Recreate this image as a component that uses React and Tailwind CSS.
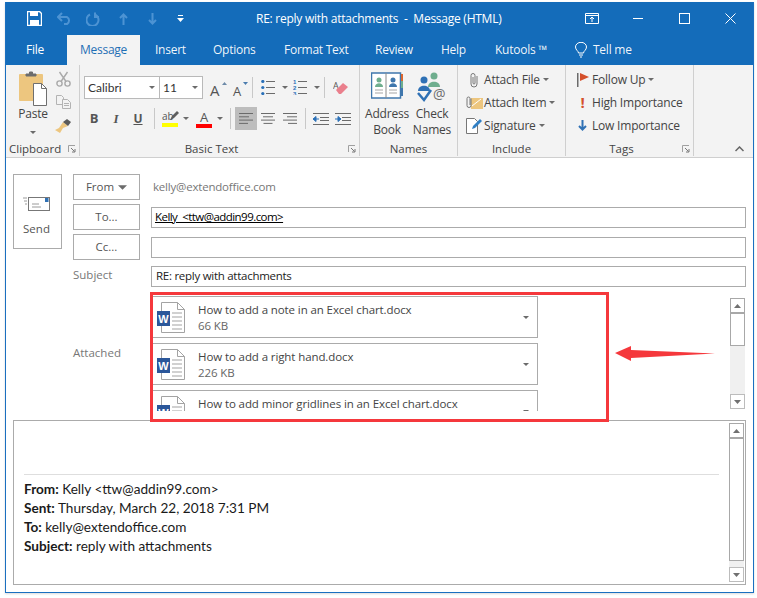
const Caret = ({ className = "" }) => (
  <svg width="6" height="3" viewBox="0 0 6 3" className={className}><path d="M0 0h6L3 3z" fill="#6b6b6b" /></svg>
);

const Launcher = ({ className = "" }) => (
  <svg width="8" height="8" viewBox="0 0 8 8" className={className}>
    <path d="M.5 7V.5H7" fill="none" stroke="#a0a0a0" />
    <path d="M3 3l3.500 3.500M7 4v3H4" fill="none" stroke="#777" />
  </svg>
);

const Divider = ({ className = "" }) => <div className={`w-px h-[21px] bg-[#c8c8c8] shrink-0 ${className}`} />;

const PasteIcon = () => (
  <svg width="28" height="36" viewBox="0 0 28 36">
    <rect x="0" y="3" width="24" height="27" rx="1" fill="#edc67f" />
    <path d="M7 5V3h3.500V1h3v2H17v2z" fill="#6c6c6c" stroke="#6c6c6c" />
    <path d="M14.500 12.500h8l5 5v17h-13z" fill="#fff" stroke="#6f6f6f" />
    <path d="M22.500 12.500v5h5" fill="none" stroke="#6f6f6f" />
  </svg>
);

const Scissors = () => (
  <svg width="15" height="16" viewBox="0 0 15 16" fill="none" stroke="#a9a9a9" strokeWidth="1.400">
    <circle cx="3.500" cy="12.500" r="2.600" />
    <circle cx="11.500" cy="12.500" r="2.600" />
    <path d="M5 10.500L11.500 1M10 10.500L3.500 1" />
  </svg>
);

const CopyIcon = () => (
  <svg width="15" height="14" viewBox="0 0 15 14" fill="none" stroke="#b3b3b3">
    <path d="M.5.500h5l2 2v7h-7z" />
    <path d="M6.500 4.500h5l3 3v6h-8z" fill="#f3f3f3" />
    <path d="M8 8.500h5M8 10.500h5" />
  </svg>
);

const Painter = () => (
  <svg width="16" height="15" viewBox="0 0 16 15">
    <path d="M8 3l5 4-5 2-3 5-5-3 4-2z" fill="#edc67f" />
    <path d="M8 3l4-3 4 3-3 4z" fill="#5a5a5a" />
  </svg>
);

const AGrow = ({ up }) => (
  <div className={`relative h-[20px] shrink-0 ${up ? "w-[15px]" : "w-[13px]"}`}>
    <span className={`absolute left-0 bottom-0 font-['Open_Sans'] leading-none text-[#555] ${up ? "text-[15px]" : "text-[13px]"}`}>A</span>
    <svg width="5" height="3" viewBox="0 0 5 3" className="absolute right-[-2px] top-[4px]">
      <path d={up ? "M0 3h5L2.500 0z" : "M0 0h5L2.500 3z"} fill={up ? "#6d8aa8" : "#4b7cae"} />
    </svg>
  </div>
);

const Lines = ({ align = "left", w = 14 }) => {
  const rows = [14, 10, 14, 9];
  return (
    <svg width={w} height="11" viewBox="0 0 14 11" stroke="#6b6b6b">
      {rows.map((l, i) => {
        const x = align === "left" ? 0 : align === "right" ? 14 - l : (14 - l) / 2;
        return <path key={i} d={`M${x} ${0.5 + i * 3.3}h${l}`} />;
      })}
    </svg>
  );
};

const Bullets = ({ numbered }) => (
  <svg width="14" height="15" viewBox="0 0 14 15">
    {[1.5, 7.5, 13.5].map((y, i) => (
      <g key={y}>
        {numbered
          ? <text x="0" y={y + 2} fontSize="6" fontWeight="700" fill="#2a70b8" fontFamily="Liberation Sans">{i + 1}</text>
          : <circle cx="1.800" cy={y} r="1.600" fill="#2a70b8" />}
        <path d={`M5 ${y}h9`} stroke="#6b6b6b" />
      </g>
    ))}
  </svg>
);

const Eraser = () => (
  <svg width="16" height="17" viewBox="0 0 16 17">
    <text x="0" y="10" fontSize="9" fill="#555" fontFamily="Open Sans">A</text>
    <path d="M3 11l7-7 5 4-7 7H6z" fill="#ea7f8c" />
  </svg>
);

const Indent = ({ inc }) => (
  <svg width="16" height="12" viewBox="0 0 16 12">
    <path d="M0 .5h16M7 4.500h9M7 7.500h9M0 11.500h16" stroke="#6b6b6b" />
    <path d={inc ? "M0 6h4M3 3.500L6 6 3 8.500z" : "M6 6H2M3 3.500L0 6l3 2.500z"} stroke="#2a70b8" fill="#2a70b8" />
  </svg>
);

const BookIcon = () => (
  <svg width="32" height="28" viewBox="0 0 32 28">
    <rect x="0.500" y="1" width="29" height="25" fill="#fff" stroke="#3f77ad" strokeWidth="1.500" />
    <path d="M15 1v25" stroke="#8a8a8a" />
    <rect x="30" y="2" width="2" height="7" fill="#d9662f" />
    <rect x="30" y="9" width="2" height="7" fill="#6fae8e" />
    <rect x="30" y="16" width="2" height="8" fill="#3f77ad" />
    <circle cx="8" cy="8" r="2.500" fill="#6fae8e" />
    <path d="M4 15c0-5 8-5 8 0z" fill="#6fae8e" />
    <circle cx="22" cy="8" r="2.500" fill="#3f77ad" />
    <path d="M18 15c0-5 8-5 8 0z" fill="#3f77ad" />
    <path d="M4 18h8M4 21h8M18 18h8M18 21h8" stroke="#a5a5a5" />
  </svg>
);

const CheckNames = () => (
  <svg width="31" height="31" viewBox="0 0 31 31">
    <circle cx="17" cy="4" r="3.500" fill="#6fae8e" />
    <path d="M11 15c0-7 12-7 12 0z" fill="#6fae8e" />
    <circle cx="7" cy="8" r="3.500" fill="#2f71b5" />
    <path d="M1 19c0-7 12-7 12 0z" fill="#2f71b5" />
    <path d="M1 21l6 7 7-10" fill="none" stroke="#2f71b5" strokeWidth="2.500" />
    <text x="16" y="27" fontSize="14" fill="#6e6e6e" fontFamily="Open Sans">@</text>
  </svg>
);

const Clip = () => (
  <svg width="11" height="16" viewBox="0 0 11 16" fill="none" stroke="#777" className="shrink-0">
    <path d="M8 4v8a3 3 0 0 1-6 0V3.500a2 2 0 0 1 4 0V11a1 1 0 0 1-2 0V5" />
  </svg>
);

const AttachItem = () => (
  <svg width="17" height="14" viewBox="0 0 17 14" className="shrink-0">
    <path d="M5 2h12v11H5z" fill="#edc67f" />
    <path d="M6 10l9-7" stroke="#fff" />
    <path d="M5 2.500v7a2 2 0 0 1-4 0V2.500a1.500 1.500 0 0 1 3 0V9" fill="none" stroke="#777" />
  </svg>
);

const SigIcon = () => (
  <svg width="17" height="17" viewBox="0 0 17 17" className="shrink-0">
    <path d="M.5 1.500h8l3 3v12H.500z" fill="#fff" stroke="#777" />
    <path d="M6 12l1-3 7-7 2 2-7 7z" fill="#2f7fc4" />
  </svg>
);

const Flag = () => (
  <svg width="12" height="14" viewBox="0 0 12 14">
    <rect x="0" y="0" width="1.500" height="14" fill="#6b6b6b" />
    <path d="M3 0l9 4-9 4z" fill="#d5502b" />
  </svg>
);

const WordIcon = () => (
  <svg width="28" height="31" viewBox="0 0 28 31" className="shrink-0">
    <path d="M4.500.5h16l7 7v23h-23z" fill="#fff" stroke="#a3a3a3" />
    <path d="M20.500.5v7h7" fill="none" stroke="#a3a3a3" />
    <path d="M15 11h10M15 15h10M15 19h10M15 23h10M15 27h10" stroke="#a3a3a3" />
    <rect x="0" y="9" width="13" height="15" fill="#2b579a" />
    <text x="6.500" y="21" textAnchor="middle" fontSize="11" fontWeight="700" fill="#fff" fontFamily="Liberation Sans">W</text>
  </svg>
);

const Arrow = ({ dir }) => (
  <svg width="7" height="4" viewBox="0 0 7 4"><path d={dir === "up" ? "M0 4h7L3.500 0z" : "M0 0h7L3.500 4z"} fill="#707070" /></svg>
);

const ScrollBar = ({ thumb, className = "" }) => (
  <div className={`w-[15px] flex flex-col shrink-0 bg-[#f0f0f0] ${className}`}>
    <div className="h-[15px] border border-[#a8a8a8] bg-white flex items-center justify-center shrink-0"><Arrow dir="up" /></div>
    <div className={`border border-[#a8a8a8] bg-white shrink-0 ${thumb}`} />
    <div className="flex-1" />
    <div className="h-[15px] border border-[#bcbcbc] bg-white flex items-center justify-center shrink-0"><Arrow dir="down" /></div>
  </div>
);

const Attachment = ({ name, size }) => (
  <div className="h-[42px] shrink-0 border border-[#ababab] bg-white flex items-start pl-[4px] pr-[8px] pt-[5px]">
    <WordIcon />
    <div className="ml-[13px] flex-1 leading-[16px] text-[11.500px] tracking-[-0.1px]">
      <div className="text-[#444]">{name}</div>
      {size && <div className="text-[#666]">{size}</div>}
    </div>
    <Caret className="mt-[14px]" />
  </div>
);

const Group = ({ w, label, children, launcher, labelClass = "justify-center" }) => (
  <div className={`${w} shrink-0 h-full flex flex-col border-r border-[#cfcfcf] relative`}>
    <div className="flex-1 min-h-0">{children}</div>
    <div className={`h-[18px] pt-[3px] flex items-center text-[11.500px] text-[#444] leading-none ${labelClass}`}>
      {label}
    </div>
    {launcher && <Launcher className="absolute right-[3px] bottom-[3px]" />}
  </div>
);

const SmallRow = ({ icon, children, caret, w = "w-[14px]" }) => (
  <div className="h-[23px] flex items-center text-[#444] text-[12px] tracking-[-0.2px]">
    <div className={`${w} flex justify-center shrink-0`}>{icon}</div>
    <span className="ml-[3px]">{children}</span>
    {caret && <Caret className="ml-[3px]" />}
  </div>
);

const Tab = ({ w, children }) => <div className={`${w} shrink-0 text-white/95`}>{children}</div>;

const FieldBtn = ({ children }) => (
  <div className="w-[67px] h-[26px] border border-[#ababab] flex items-center justify-center text-[#555] text-[11.500px] shrink-0">{children}</div>
);

export default function App() {
  return (
    <div className="w-[757px] h-[598px] bg-white pl-[5px] pt-[2px] font-['Open_Sans',sans-serif] overflow-hidden">
      <div className="relative w-[749px] h-[591px] border-x border-b border-[#1a6fc0] flex flex-col shadow-[0_1px_2px_rgba(0,0,0,0.15)]">
        {/* Title bar */}
        <div className="h-[33px] bg-[#146cba] flex items-center text-white shrink-0 relative">
          <svg width="15" height="15" viewBox="0 0 15 15" className="ml-[21px]">
            <path d="M.5.500h12l2 2v12H.500z" fill="#146cba" stroke="#fff" strokeWidth="1.400" />
            <rect x="3" y="1" width="8" height="4" fill="#fff" />
            <rect x="3" y="9" width="9" height="5" fill="#fff" />
          </svg>
          <svg width="15" height="13" viewBox="0 0 15 13" fill="none" stroke="#4d93d3" strokeWidth="2" className="ml-[15px]">
            <path d="M1 5h9a4 4 0 0 1 0 7H7M5 1L1 5l4 4" />
          </svg>
          <svg width="14" height="14" viewBox="0 0 14 14" fill="none" stroke="#4d93d3" strokeWidth="2" className="ml-[14px]">
            <path d="M9 2.500a6 6 0 1 1-5 0M9 .5V5h4" />
          </svg>
          <svg width="9" height="12" viewBox="0 0 9 12" fill="none" stroke="#4d93d3" strokeWidth="2" className="ml-[19px]">
            <path d="M4.500 12V2M1 5l3.500-3.500L8 5" />
          </svg>
          <svg width="9" height="12" viewBox="0 0 9 12" fill="none" stroke="#4d93d3" strokeWidth="2" className="ml-[20px]">
            <path d="M4.500 0v10M1 7l3.500 3.500L8 7" />
          </svg>
          <svg width="7" height="7" viewBox="0 0 7 7" className="ml-[20px]">
            <path d="M1 .5h5" stroke="#fff" />
            <path d="M0 3h7L3.500 7z" fill="#fff" />
          </svg>
          <span className="ml-[72px] text-[12px] tracking-[-0.25px] whitespace-pre">RE: reply with attachments  -  Message (HTML)</span>
          <svg width="14" height="11" viewBox="0 0 14 11" fill="none" stroke="#fff" className="absolute left-[579px] top-[11px]">
            <path d="M.5.500h13v10H.500zM.5 2.500h13" />
            <path d="M7 9V4M5 6l2-2 2 2" />
          </svg>
          <div className="absolute left-[627px] top-[16px] w-[10px] h-px bg-white" />
          <div className="absolute left-[673px] top-[11px] w-[11px] h-[11px] border border-white" />
          <svg width="11" height="11" viewBox="0 0 11 11" stroke="#fff" className="absolute left-[719px] top-[11px]">
            <path d="M.5.500l10 10M10.500.5l-10 10" />
          </svg>
        </div>

        {/* Tabs */}
        <div className="h-[30px] bg-[#146cba] flex items-stretch shrink-0 text-[12px] tracking-[-0.25px]">
          <div className="ml-[20px] w-[41px] flex items-center text-white">File</div>
          <div className="w-[73px] bg-[#f3f3f3] text-[#1f6fb5] flex items-center justify-center">Message</div>
          <div className="flex items-center ml-[15px]">
            <Tab w="w-[58px]">Insert</Tab>
            <Tab w="w-[71px]">Options</Tab>
            <Tab w="w-[91px]">Format Text</Tab>
            <Tab w="w-[66px]">Review</Tab>
            <Tab w="w-[54px]">Help</Tab>
            <Tab w="w-[80px]">Kutools ™</Tab>
            <svg width="12" height="16" viewBox="0 0 12 16" fill="none" stroke="#fff" className="shrink-0">
              <path d="M3.500 11c0-2-3-3-3-6a5.500 4.700 0 0 1 11 0c0 3-3 4-3 6zM4 13h4M5 15h2" />
            </svg>
            <span className="ml-[6px] text-white/95">Tell me</span>
          </div>
        </div>

        {/* Ribbon */}
        <div className="h-[93px] bg-[#f3f3f3] border-b border-[#cfcfcf] flex shrink-0 pb-[1px] relative">
          <Group w="w-[74px]" label="Clipboard" labelClass="pl-[3px]" launcher>
            <div className="flex pl-[13px] pt-[6px]">
              <div className="w-[28px] flex flex-col items-center">
                <PasteIcon />
                <span className="text-[12px] tracking-[-0.2px] text-[#444] leading-[16px] mt-[-1px]">Paste</span>
                <Caret className="mt-[9px]" />
              </div>
              <div className="ml-[8px] flex flex-col items-center w-[16px]">
                <Scissors />
                <div className="mt-[8px]"><CopyIcon /></div>
                <div className="mt-[10px]"><Painter /></div>
              </div>
            </div>
          </Group>

          <Group w="w-[280px]" label={<span className="pr-[16px]">Basic Text</span>} launcher>
            <div className="pl-[4px] pt-[11px]">
              <div className="flex items-center h-[23px]">
                <div className="w-[76px] h-[23px] border border-[#b9b9b9] bg-white flex items-center justify-between pl-[3px] pr-[4px] text-[12px] text-[#333] font-['Lato']">
                  Calibri <Caret />
                </div>
                <div className="w-[43px] h-[23px] border border-l-0 border-[#b9b9b9] bg-white flex items-center justify-between pl-[3px] pr-[4px] text-[12px] text-[#333] font-['Lato']">
                  11 <Caret />
                </div>
                <div className="ml-[7px]"><AGrow up /></div>
                <div className="ml-[8px]"><AGrow /></div>
                <Divider className="ml-[6px]" />
                <div className="ml-[8px]"><Bullets /></div>
                <Caret className="ml-[7px]" />
                <div className="ml-[5px]"><Bullets numbered /></div>
                <Caret className="ml-[7px]" />
                <Divider className="ml-[4px]" />
                <div className="ml-[8px]"><Eraser /></div>
              </div>
              <div className="flex items-center h-[23px] mt-[8px]">
                <span className="ml-[4px] w-[12px] text-center text-[13px] font-bold text-[#555]">B</span>
                <span className="ml-[10px] w-[12px] text-center text-[13px] italic font-bold text-[#555] font-['Liberation_Serif']">I</span>
                <span className="ml-[10px] w-[12px] text-center text-[12px] font-bold underline text-[#555]">U</span>
                <Divider className="ml-[10px]" />
                <div className="ml-[7px] w-[16px] flex flex-col items-center relative">
                  <span className="text-[10px] leading-[13px] text-[#555] self-start">ab</span>
                  <svg width="9" height="9" viewBox="0 0 9 9" className="absolute right-[-1px] top-[1px]"><path d="M0 9l2-4 5-5 2 2-5 5z" fill="#5e5e5e" /></svg>
                  <div className="w-[16px] h-[4px] bg-[#ffff00]" />
                </div>
                <Caret className="ml-[5px]" />
                <div className="ml-[7px] w-[16px] flex flex-col items-center">
                  <span className="text-[13px] leading-[14px] text-[#555]">A</span>
                  <div className="w-[16px] h-[4px] bg-[#ff0000]" />
                </div>
                <Caret className="ml-[5px]" />
                <Divider className="ml-[7px]" />
                <div className="ml-[4px] w-[22px] h-[23px] bg-[#bdbdbd] flex items-center justify-center"><Lines /></div>
                <div className="ml-[4px]"><Lines align="center" /></div>
                <div className="ml-[8px]"><Lines align="right" /></div>
                <Divider className="ml-[8px]" />
                <div className="ml-[7px]"><Indent /></div>
                <div className="ml-[6px]"><Indent inc /></div>
              </div>
            </div>
          </Group>

          <Group w="w-[98px]" label="Names">
            <div className="flex text-[12px] tracking-[-0.2px] text-[#444] leading-[16px] text-center pt-[7px]">
              <div className="w-[50px] ml-[2px] flex flex-col items-center">
                <BookIcon />
                <span className="mt-[6px]">Address<br />Book</span>
              </div>
              <div className="w-[40px] flex flex-col items-center">
                <CheckNames />
                <span className="mt-[3px]">Check<br />Names</span>
              </div>
            </div>
          </Group>

          <Group w="w-[108px]" label="Include">
            <div className="pl-[9px] pt-[3px]">
              <SmallRow icon={<Clip />} caret>Attach File</SmallRow>
              <SmallRow icon={<AttachItem />} caret>Attach Item</SmallRow>
              <SmallRow icon={<SigIcon />} caret>Signature</SmallRow>
            </div>
          </Group>

          <Group w="w-[128px]" label={<span className="pr-[16px]">Tags</span>} launcher>
            <div className="pl-[10px] pt-[3px]">
              <SmallRow w="w-[13px]" icon={<Flag />} caret>Follow Up</SmallRow>
              <SmallRow w="w-[13px]" icon={<span className="text-[#d5502b] font-bold text-[15px] leading-none">!</span>}>High Importance</SmallRow>
              <SmallRow w="w-[13px]" icon={
                <svg width="9" height="11" viewBox="0 0 9 11" fill="none" stroke="#2f71b5" strokeWidth="2"><path d="M4.500 0v9M1 6l3.500 3.500L8 6" /></svg>
              }>Low Importance</SmallRow>
            </div>
          </Group>

          <svg width="9" height="6" viewBox="0 0 9 6" fill="none" stroke="#666" strokeWidth="1.500" className="absolute left-[729px] bottom-[5px]">
            <path d="M.5 5l4-4 4 4" />
          </svg>
        </div>

        {/* Compose */}
        <div className="flex-1 min-h-0 bg-white pl-[7px] pt-[16px] flex flex-col">
          <div className="flex">
            <div className="w-[49px] h-[75px] border border-[#ababab] flex flex-col items-center shrink-0 mr-[11px] pt-[21px] pr-[2px]">
              <svg width="27" height="15" viewBox="0 0 27 15">
                <rect x="5.500" y="1.500" width="21" height="13" fill="#fff" stroke="#777" />
                <rect x="22" y="2" width="3.500" height="4" fill="#2f71b5" />
                <path d="M0 2h4M1 5h3M2 8h2M9 8h7M9 11h9" stroke="#9a9a9a" />
              </svg>
              <span className="mt-[12px] text-[11.500px] text-[#555] leading-none">Send</span>
            </div>
            <div className="w-[673px] flex flex-col">
              <div className="flex items-center">
                <FieldBtn>
                  <span>From</span>
                  <Caret className="ml-[4px] w-[9px] h-[5px]" />
                </FieldBtn>
                <span className="ml-[13px] text-[11.500px] tracking-[-0.2px] text-[#777]">kelly@extendoffice.com</span>
              </div>
              <div className="flex items-center mt-[4px]">
                <FieldBtn>To...</FieldBtn>
                <div className="ml-[11px] flex-1 h-[21px] border border-[#ababab] flex items-center pl-[3px] pb-[1px] text-[11.500px] tracking-[-0.55px] text-black leading-none">
                  <span className="underline whitespace-pre">Kelly  &lt;ttw@addin99.com&gt;</span>
                </div>
              </div>
              <div className="flex items-center mt-[4px]">
                <FieldBtn>Cc...</FieldBtn>
                <div className="ml-[11px] flex-1 h-[21px] border border-[#ababab]" />
              </div>
              <div className="flex items-center mt-[6px] h-[21px]">
                <div className="w-[67px] text-[11.500px] text-[#777] shrink-0 pb-[4px]">Subject</div>
                <div className="ml-[11px] flex-1 h-[21px] border border-[#ababab] flex items-center pl-[4px] pb-[1px] text-[11.500px] tracking-[-0.27px] text-[#222]">RE: reply with attachments</div>
              </div>
              <div className="flex mt-[9px] h-[115px]">
                <div className="w-[67px] shrink-0 text-[11.500px] text-[#777] pt-[48px]">Attached</div>
                <div className="ml-[12px] w-[386px] shrink-0 h-[115px] overflow-hidden flex flex-col gap-[5px]">
                  <Attachment name="How to add a note in an Excel chart.docx" size="66 KB" />
                  <Attachment name="How to add a right hand.docx" size="226 KB" />
                  <Attachment name="How to add minor gridlines in an Excel chart.docx" />
                </div>
                <ScrollBar thumb="h-[33px]" className="ml-[192px] mt-[2px] h-[111px]" />
              </div>
            </div>
          </div>

          {/* Message body */}
          <div className="mt-[9px] w-[733px] h-[165px] border border-[#ababab] flex shrink-0 font-['Lato',sans-serif] text-[13.600px] text-[#1a1a1a] leading-[19px]">
            <div className="flex-1 pl-[10px] pt-[53px] pr-[10px]">
              <div className="border-t border-[#dedede] pt-[5px]">
                <div><b>From:</b> Kelly &lt;ttw@addin99.com&gt;</div>
                <div><b>Sent:</b> Thursday, March 22, 2018 7:31 PM</div>
                <div><b>To:</b> kelly@extendoffice.com</div>
                <div><b>Subject:</b> reply with attachments</div>
              </div>
            </div>
            <ScrollBar thumb="h-[123px]" className="mr-[1px] mt-[2px] mb-[2px]" />
          </div>
        </div>

        {/* Red annotation */}
        <div className="absolute left-[144px] top-[290px] w-[459px] h-[130px] border-[3px] border-[#f5383c] pointer-events-none" />
        <svg width="100" height="16" viewBox="0 0 100 16" className="absolute left-[609px] top-[343px]">
          <path d="M0 8L16 1l0 4 84 3.500L16 13v3z" fill="#f5383c" />
        </svg>
      </div>
    </div>
  );
}
